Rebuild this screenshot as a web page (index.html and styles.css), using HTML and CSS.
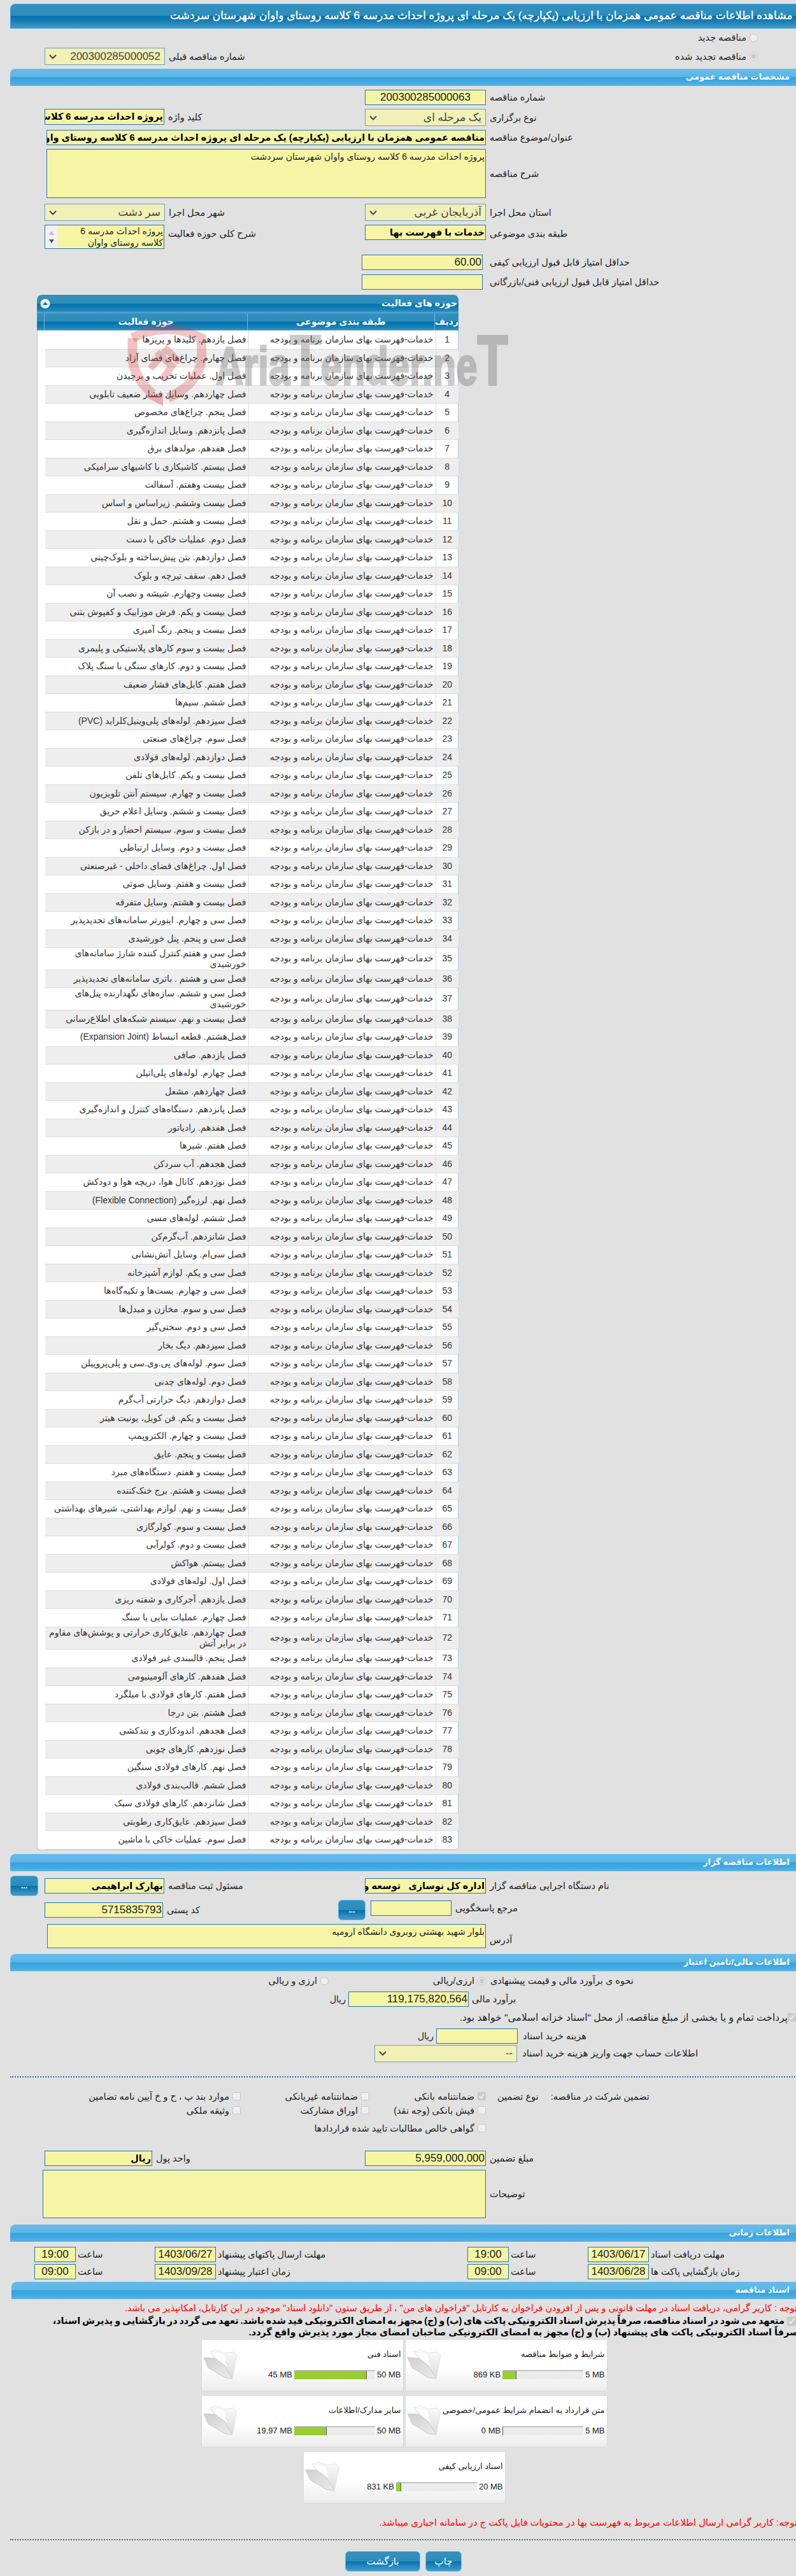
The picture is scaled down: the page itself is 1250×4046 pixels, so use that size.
FILE: index.html
```html
<!DOCTYPE html>
<html lang="fa">
<head>
<meta charset="utf-8">
<title>مشاهده اطلاعات مناقصه</title>
<link rel="stylesheet" href="styles.css">
</head>
<body>
<svg class="sprite" aria-hidden="true"><defs>
<linearGradient id="fb" x1="0" y1="0" x2="0" y2="1"><stop offset="0" stop-color="#fafafa"/><stop offset="1" stop-color="#dcdcdc"/></linearGradient>
<linearGradient id="ff" x1="0" y1="0" x2="1" y2="1"><stop offset="0" stop-color="#cfcfcf"/><stop offset="1" stop-color="#ececec"/></linearGradient>
<symbol id="folder" viewBox="0 0 52 47"><path d="M10 3 20 0 33 5 47 3 52 8 45 45 30 30Z" fill="url(#fb)" stroke="#e2e2e2"/><path d="M14 5 31 7 36 26 22 14Z" fill="#fff"/><path d="M0 12 17 13 33 25 45 45 32 43 7 28Z" fill="url(#ff)" stroke="#c9c9c9" stroke-linejoin="round"/></symbol>
</defs></svg>
<main class="page">
<header class="bar-main"><span>مشاهده اطلاعات مناقصه عمومی همزمان با ارزیابی (یکپارچه) یک مرحله ای پروژه احداث مدرسه 6 کلاسه روستای واوان شهرستان سردشت</span></header>

<div class="row radio-row r-a"><label class="choice"><input type="radio" disabled><span>مناقصه جدید</span></label></div>
<div class="row radio-row r-b">
  <div class="field f-prev"><div class="sel w189"><svg class="chev" viewBox="0 0 12 8"><path d="M1 1.5 6 6.5 11 1.5" fill="none" stroke="#444" stroke-width="2"/></svg><span>200300285000052</span></div><span class="lbl">شماره مناقصه قبلی</span></div>
  <label class="choice"><input type="radio" disabled checked><span>مناقصه تجدید شده</span></label>
</div>

<h2 class="bar mt6">مشخصات مناقصه عمومی</h2>

<div class="row mt6"><div class="field f1"></div><div class="field"><div class="in w190 ltrnum">200300285000063</div><span class="lbl">شماره مناقصه</span></div></div>
<div class="row mt6">
  <div class="field f1"><div class="in w188 h25 bold">پروژه احداث مدرسه 6 کلاسه روستای واوان شهرستان سردشت</div><span class="lbl">کلید واژه</span></div>
  <div class="field"><div class="sel w190"><svg class="chev" viewBox="0 0 12 8"><path d="M1 1.5 6 6.5 11 1.5" fill="none" stroke="#444" stroke-width="2"/></svg><span>یک مرحله ای</span></div><span class="lbl">نوع برگزاری</span></div>
</div>
<div class="row mt6 wide"><div class="field"><div class="in w690 bold">مناقصه عمومی همزمان با ارزیابی (یکپارچه) یک مرحله ای پروژه احداث مدرسه 6 کلاسه روستای واوان شهرستان سردشت</div><span class="lbl">عنوان/موضوع مناقصه</span></div></div>
<div class="row mt6 wide"><div class="field center"><div class="in w690 area h77">پروژه احداث مدرسه 6 کلاسه روستای واوان شهرستان سردشت</div><span class="lbl">شرح مناقصه</span></div></div>
<div class="row mt9">
  <div class="field f1"><div class="sel w189"><svg class="chev" viewBox="0 0 12 8"><path d="M1 1.5 6 6.5 11 1.5" fill="none" stroke="#444" stroke-width="2"/></svg><span>سر دشت</span></div><span class="lbl">شهر محل اجرا</span></div>
  <div class="field"><div class="sel w190"><svg class="chev" viewBox="0 0 12 8"><path d="M1 1.5 6 6.5 11 1.5" fill="none" stroke="#444" stroke-width="2"/></svg><span>آذربایجان غربی</span></div><span class="lbl">استان محل اجرا</span></div>
</div>
<div class="row mt6">
  <div class="field f1 top"><div class="scrollarea"><div class="scroll"><svg viewBox="0 0 8 6"><path d="M4 0 8 6H0Z" fill="#bbb"/></svg><svg viewBox="0 0 8 6"><path d="M0 0H8L4 6Z" fill="#555"/></svg></div><div class="scrolltext">پروژه احداث مدرسه 6 کلاسه روستای واوان</div></div><span class="lbl lbl-top">شرح کلی حوزه فعالیت</span></div>
  <div class="field top"><div class="in w190 bold">خدمات با فهرست بها</div><span class="lbl lbl-top">طبقه بندی موضوعی</span></div>
</div>
<div class="row mt9 shift"><div class="field"><div class="in w190">60.00</div><span class="lbl lbl-far">حداقل امتیاز قابل قبول ارزیابی کیفی</span></div></div>
<div class="row mt7 shift"><div class="field"><div class="in w190"></div><span class="lbl lbl-far">حداقل امتیاز قابل قبول ارزیابی فنی/بازرگانی</span></div></div>

<section class="panel">
<svg class="watermark" viewBox="0 0 600 140">
  <path class="wm-shield" d="M8 30Q62 2 116 30L117 62Q112 102 64 124" />
  <path class="wm-shield" d="M8 30L8 66Q14 96 40 118" />
  <path class="wm-arrow" d="M28 122 56 116 56 137Z"/>
  <path class="wm-shield thin" d="M36 78 62 48 82 68M46 52 70 74 54 96"/>
  <text class="wm-text" x="139" y="103" textLength="459" lengthAdjust="spacingAndGlyphs">Aria<tspan class="wm-big">T</tspan>ender.ne<tspan class="wm-big">T</tspan></text>
</svg>
<div class="panel-title"><span class="collapse"><svg viewBox="0 0 16 16"><circle cx="8" cy="8" r="7.5" fill="#e8f3fa"/><path d="M4 10 8 5 12 10Z" fill="#1b6f9f"/></svg></span><span>حوزه های فعالیت</span></div>
<div class="col-head"><span></span><span>حوزه فعالیت</span><span>طبقه بندی موضوعی</span><span>ردیف</span></div>
<div class="panel-body">
<table class="grid"><colgroup><col class="c1"><col class="c2"><col class="c3"></colgroup><tbody>
<tr><td>فصل یازدهم. کلیدها و پریزها<td>خدمات-فهرست بهای سازمان برنامه و بودجه<td>1
<tr><td>فصل چهارم. چراغ‌های فضای آزاد<td>خدمات-فهرست بهای سازمان برنامه و بودجه<td>2
<tr><td>فصل اول. عملیات تخریب و برچیدن<td>خدمات-فهرست بهای سازمان برنامه و بودجه<td>3
<tr><td>فصل چهاردهم. وسایل فشار ضعیف تابلویی<td>خدمات-فهرست بهای سازمان برنامه و بودجه<td>4
<tr><td>فصل پنجم. چراغ‌های مخصوص<td>خدمات-فهرست بهای سازمان برنامه و بودجه<td>5
<tr><td>فصل پانزدهم. وسایل اندازه‌گیری<td>خدمات-فهرست بهای سازمان برنامه و بودجه<td>6
<tr><td>فصل هفدهم. مولدهای برق<td>خدمات-فهرست بهای سازمان برنامه و بودجه<td>7
<tr><td>فصل بیستم. کاشیکاری با کاشیهای سرامیکی<td>خدمات-فهرست بهای سازمان برنامه و بودجه<td>8
<tr><td>فصل بیست وهفتم. آسفالت<td>خدمات-فهرست بهای سازمان برنامه و بودجه<td>9
<tr><td>فصل بیست وششم. زیراساس و اساس<td>خدمات-فهرست بهای سازمان برنامه و بودجه<td>10
<tr><td>فصل بیست و هشتم. حمل و نقل<td>خدمات-فهرست بهای سازمان برنامه و بودجه<td>11
<tr><td>فصل دوم. عملیات خاکی با دست<td>خدمات-فهرست بهای سازمان برنامه و بودجه<td>12
<tr><td>فصل دوازدهم. بتن پیش‌ساخته و بلوک‌چینی<td>خدمات-فهرست بهای سازمان برنامه و بودجه<td>13
<tr><td>فصل دهم. سقف تیرچه و بلوک<td>خدمات-فهرست بهای سازمان برنامه و بودجه<td>14
<tr><td>فصل بیست وچهارم. شیشه و نصب آن<td>خدمات-فهرست بهای سازمان برنامه و بودجه<td>15
<tr><td>فصل بیست و یکم. فرش موزاییک و کفپوش بتنی<td>خدمات-فهرست بهای سازمان برنامه و بودجه<td>16
<tr><td>فصل بیست و پنجم. رنگ آمیزی<td>خدمات-فهرست بهای سازمان برنامه و بودجه<td>17
<tr><td>فصل بیست و سوم کارهای پلاستیکی و پلیمری<td>خدمات-فهرست بهای سازمان برنامه و بودجه<td>18
<tr><td>فصل بیست و دوم. کارهای سنگی با سنگ پلاک<td>خدمات-فهرست بهای سازمان برنامه و بودجه<td>19
<tr><td>فصل هفتم. کابل‌های فشار ضعیف<td>خدمات-فهرست بهای سازمان برنامه و بودجه<td>20
<tr><td>فصل ششم. سیم‌ها<td>خدمات-فهرست بهای سازمان برنامه و بودجه<td>21
<tr><td>فصل سیزدهم. لوله‌های پلی‌وینیل‌کلراید (PVC)<td>خدمات-فهرست بهای سازمان برنامه و بودجه<td>22
<tr><td>فصل سوم. چراغ‌های صنعتی<td>خدمات-فهرست بهای سازمان برنامه و بودجه<td>23
<tr><td>فصل دوازدهم. لوله‌های فولادی<td>خدمات-فهرست بهای سازمان برنامه و بودجه<td>24
<tr><td>فصل بیست و یکم. کابل‌های تلفن<td>خدمات-فهرست بهای سازمان برنامه و بودجه<td>25
<tr><td>فصل بیست و چهارم. سیستم آنتن تلویزیون<td>خدمات-فهرست بهای سازمان برنامه و بودجه<td>26
<tr><td>فصل بیست و ششم. وسایل اعلام حریق<td>خدمات-فهرست بهای سازمان برنامه و بودجه<td>27
<tr><td>فصل بیست و سوم. سیستم احضار و در بازکن<td>خدمات-فهرست بهای سازمان برنامه و بودجه<td>28
<tr><td>فصل بیست و دوم. وسایل ارتباطی<td>خدمات-فهرست بهای سازمان برنامه و بودجه<td>29
<tr><td>فصل اول. چراغ‌های فضای داخلی - غیرصنعتی<td>خدمات-فهرست بهای سازمان برنامه و بودجه<td>30
<tr><td>فصل بیست و هفتم. وسایل صوتی<td>خدمات-فهرست بهای سازمان برنامه و بودجه<td>31
<tr><td>فصل بیست و هشتم. وسایل متفرقه<td>خدمات-فهرست بهای سازمان برنامه و بودجه<td>32
<tr><td>فصل سی و چهارم. اینورتر سامانه‌های تجدیدپذیر<td>خدمات-فهرست بهای سازمان برنامه و بودجه<td>33
<tr><td>فصل سی و پنجم. پنل خورشیدی<td>خدمات-فهرست بهای سازمان برنامه و بودجه<td>34
<tr><td>فصل سی و هفتم.کنترل کننده شارژ سامانه‌های خورشیدی<td>خدمات-فهرست بهای سازمان برنامه و بودجه<td>35
<tr><td>فصل سی و هشتم . باتری سامانه‌های تجدیدپذیر<td>خدمات-فهرست بهای سازمان برنامه و بودجه<td>36
<tr><td>فصل سی و ششم. سازه‌های نگهدارنده پنل‌های خورشیدی<td>خدمات-فهرست بهای سازمان برنامه و بودجه<td>37
<tr><td>فصل بیست و نهم. سیستم شبکه‌های اطلاع‌رسانی<td>خدمات-فهرست بهای سازمان برنامه و بودجه<td>38
<tr><td>فصل‌هشتم. قطعه انبساط (Expansion Joint)<td>خدمات-فهرست بهای سازمان برنامه و بودجه<td>39
<tr><td>فصل یازدهم. صافی<td>خدمات-فهرست بهای سازمان برنامه و بودجه<td>40
<tr><td>فصل چهارم. لوله‌های پلی‌اتیلن<td>خدمات-فهرست بهای سازمان برنامه و بودجه<td>41
<tr><td>فصل چهاردهم. مشعل<td>خدمات-فهرست بهای سازمان برنامه و بودجه<td>42
<tr><td>فصل پانزدهم. دستگاه‌های کنترل و اندازه‌گیری<td>خدمات-فهرست بهای سازمان برنامه و بودجه<td>43
<tr><td>فصل هفدهم. رادیاتور<td>خدمات-فهرست بهای سازمان برنامه و بودجه<td>44
<tr><td>فصل هفتم. شیرها<td>خدمات-فهرست بهای سازمان برنامه و بودجه<td>45
<tr><td>فصل هجدهم. آب سردکن<td>خدمات-فهرست بهای سازمان برنامه و بودجه<td>46
<tr><td>فصل نوزدهم. کانال هوا، دریچه هوا و دودکش<td>خدمات-فهرست بهای سازمان برنامه و بودجه<td>47
<tr><td>فصل نهم. لرزه‌گیر (Flexible Connection)<td>خدمات-فهرست بهای سازمان برنامه و بودجه<td>48
<tr><td>فصل ششم. لوله‌های مسی<td>خدمات-فهرست بهای سازمان برنامه و بودجه<td>49
<tr><td>فصل شانزدهم. آب‌گرم‌کن<td>خدمات-فهرست بهای سازمان برنامه و بودجه<td>50
<tr><td>فصل سی‌ام. وسایل آتش‌نشانی<td>خدمات-فهرست بهای سازمان برنامه و بودجه<td>51
<tr><td>فصل سی و یکم. لوازم آشپزخانه<td>خدمات-فهرست بهای سازمان برنامه و بودجه<td>52
<tr><td>فصل سی و چهارم. بست‌ها و تکیه‌گاه‌ها<td>خدمات-فهرست بهای سازمان برنامه و بودجه<td>53
<tr><td>فصل سی و سوم. مخازن و مبدل‌ها<td>خدمات-فهرست بهای سازمان برنامه و بودجه<td>54
<tr><td>فصل سی و دوم. سختی‌گیر<td>خدمات-فهرست بهای سازمان برنامه و بودجه<td>55
<tr><td>فصل سیزدهم. دیگ بخار<td>خدمات-فهرست بهای سازمان برنامه و بودجه<td>56
<tr><td>فصل سوم. لوله‌های پی.وی.سی و پلی‌پروپیلن<td>خدمات-فهرست بهای سازمان برنامه و بودجه<td>57
<tr><td>فصل دوم. لوله‌های چدنی<td>خدمات-فهرست بهای سازمان برنامه و بودجه<td>58
<tr><td>فصل دوازدهم. دیگ حرارتی آب‌گرم<td>خدمات-فهرست بهای سازمان برنامه و بودجه<td>59
<tr><td>فصل بیست و یکم. فن کویل، یونیت هیتر<td>خدمات-فهرست بهای سازمان برنامه و بودجه<td>60
<tr><td>فصل بیست و چهارم. الکتروپمپ<td>خدمات-فهرست بهای سازمان برنامه و بودجه<td>61
<tr><td>فصل بیست و پنجم. عایق<td>خدمات-فهرست بهای سازمان برنامه و بودجه<td>62
<tr><td>فصل بیست و هفتم. دستگاه‌های مبرد<td>خدمات-فهرست بهای سازمان برنامه و بودجه<td>63
<tr><td>فصل بیست و هشتم. برج خنک‌کننده<td>خدمات-فهرست بهای سازمان برنامه و بودجه<td>64
<tr><td>فصل بیست و نهم. لوازم بهداشتی، شیرهای بهداشتی<td>خدمات-فهرست بهای سازمان برنامه و بودجه<td>65
<tr><td>فصل بیست و سوم. کولرگازی<td>خدمات-فهرست بهای سازمان برنامه و بودجه<td>66
<tr><td>فصل بیست و دوم. کولرآبی<td>خدمات-فهرست بهای سازمان برنامه و بودجه<td>67
<tr><td>فصل بیستم. هواکش<td>خدمات-فهرست بهای سازمان برنامه و بودجه<td>68
<tr><td>فصل اول. لوله‌های فولادی<td>خدمات-فهرست بهای سازمان برنامه و بودجه<td>69
<tr><td>فصل یازدهم. آجرکاری و شفته ریزی<td>خدمات-فهرست بهای سازمان برنامه و بودجه<td>70
<tr><td>فصل چهارم. عملیات بنایی با سنگ<td>خدمات-فهرست بهای سازمان برنامه و بودجه<td>71
<tr><td>فصل چهاردهم. عایق‌کاری حرارتی و پوشش‌های مقاوم در برابر آتش<td>خدمات-فهرست بهای سازمان برنامه و بودجه<td>72
<tr><td>فصل پنجم. قالببندی غیر فولادی<td>خدمات-فهرست بهای سازمان برنامه و بودجه<td>73
<tr><td>فصل هفدهم. کارهای آلومینیومی<td>خدمات-فهرست بهای سازمان برنامه و بودجه<td>74
<tr><td>فصل هفتم. کارهای فولادی با میلگرد<td>خدمات-فهرست بهای سازمان برنامه و بودجه<td>75
<tr><td>فصل هشتم. بتن درجا<td>خدمات-فهرست بهای سازمان برنامه و بودجه<td>76
<tr><td>فصل هجدهم. اندودکاری و بندکشی<td>خدمات-فهرست بهای سازمان برنامه و بودجه<td>77
<tr><td>فصل نوزدهم. کارهای چوبی<td>خدمات-فهرست بهای سازمان برنامه و بودجه<td>78
<tr><td>فصل نهم. کارهای فولادی سنگین<td>خدمات-فهرست بهای سازمان برنامه و بودجه<td>79
<tr><td>فصل ششم. قالب‌بندی فولادی<td>خدمات-فهرست بهای سازمان برنامه و بودجه<td>80
<tr><td>فصل شانزدهم. کارهای فولادی سبک<td>خدمات-فهرست بهای سازمان برنامه و بودجه<td>81
<tr><td>فصل سیزدهم. عایق‌کاری رطوبتی<td>خدمات-فهرست بهای سازمان برنامه و بودجه<td>82
<tr><td>فصل سوم. عملیات خاکی با ماشین<td>خدمات-فهرست بهای سازمان برنامه و بودجه<td>83
</tbody></table>
</div>
</section>

<h2 class="bar mt6">اطلاعات مناقصه گزار</h2>
<div class="row org-row">
  <button class="dots" type="button">...</button>
  <div class="field f-org"><div class="in w188 bold">بهارک ابراهیمی</div><span class="lbl">مسئول ثبت مناقصه</span></div>
  <div class="field"><div class="in w190 bold">اداره کل نوسازی   توسعه و تجهیز مدارس</div><span class="lbl">نام دستگاه اجرایی مناقصه گزار</span></div>
</div>
<div class="row ref-row">
  <div class="field f-code"><div class="in w186">5715835793</div><span class="lbl">کد پستی</span></div>
  <button class="dots dots-ref" type="button">...</button>
  <div class="field"><div class="in w127"></div><span class="lbl">مرجع پاسخگویی</span></div>
</div>
<div class="row mt6 wide-addr"><div class="field"><div class="in w689 area h38">بلوار شهید بهشتی روبروی دانشگاه ارومیه</div><span class="lbl lbl-low">آدرس</span></div></div>

<h2 class="bar mt9">اطلاعات مالی/تامین اعتبار</h2>
<div class="estimate">
  <label class="choice c-rial"><input type="radio" disabled><span>ارزی و ریالی</span></label>
  <label class="choice c-arz"><input type="radio" disabled checked><span>ارزی/ریالی</span></label>
  <span class="lbl">نحوه ی برآورد مالی و قیمت پیشنهادی</span>
</div>
<div class="row est-row"><span class="unit">ریال</span><div class="in w189">119,175,820,564</div><span class="lbl lbl-tight">برآورد مالی</span></div>
<label class="treasury"><input type="checkbox" disabled checked><span>پرداخت تمام و یا بخشی از مبلغ مناقصه، از محل "اسناد خزانه اسلامی" خواهد بود.</span></label>
<div class="row cost-row"><span class="unit">ریال</span><div class="in w128"></div><span class="lbl lbl-mid">هزینه خرید اسناد</span></div>
<div class="row acc-row"><div class="sel w224"><svg class="chev" viewBox="0 0 12 8"><path d="M1 1.5 6 6.5 11 1.5" fill="none" stroke="#444" stroke-width="2"/></svg><span>--</span></div><span class="lbl lbl-mid lbl-acc">اطلاعات حساب جهت واریز هزینه خرید اسناد</span></div>
<hr class="rule r1">

<div class="guar g1">
  <label class="choice"><input type="checkbox" disabled><span>موارد بند پ ، ح و خ آیین نامه تضامین</span></label>
  <label class="choice"><input type="checkbox" disabled><span>ضمانتنامه غیربانکی</span></label>
  <label class="choice"><input type="checkbox" disabled checked><span>ضمانتنامه بانکی</span></label>
  <div class="guar-label"><span class="lbl">نوع تضمین</span><span class="lbl">تضمین شرکت در مناقصه:</span></div>
</div>
<div class="guar g2">
  <label class="choice"><input type="checkbox" disabled><span>وثیقه ملکی</span></label>
  <label class="choice"><input type="checkbox" disabled><span>اوراق مشارکت</span></label>
  <label class="choice"><input type="checkbox" disabled><span>فیش بانکی (وجه نقد)</span></label>
</div>
<div class="guar g3">
  <span></span><span></span>
  <label class="choice"><input type="checkbox" disabled><span>گواهی خالص مطالبات تایید شده قراردادها</span></label>
</div>

<div class="row amount-row">
  <div class="field f1"><div class="in w169 bold">ریال</div><span class="lbl">واحد پول</span></div>
  <div class="field"><div class="in w190">5,959,000,000</div><span class="lbl">مبلغ تضمین</span></div>
</div>
<div class="row mt6 wide-note"><div class="field center"><div class="in w696 area h76"></div><span class="lbl">توضیحات</span></div></div>

<h2 class="bar mt10">اطلاعات زمانی</h2>
<div class="times t1">
  <div class="field"><div class="in tm">19:00</div><span class="lbl">ساعت</span></div>
  <div class="field"><div class="in dt">1403/06/27</div><span class="lbl">مهلت ارسال پاکتهای پیشنهاد</span></div>
  <div class="field"><div class="in tm">19:00</div><span class="lbl">ساعت</span></div>
  <div class="field"><div class="in dt">1403/06/17</div><span class="lbl">مهلت دریافت اسناد</span></div>
</div>
<div class="times t2">
  <div class="field"><div class="in tm">09:00</div><span class="lbl">ساعت</span></div>
  <div class="field"><div class="in dt">1403/09/28</div><span class="lbl">زمان اعتبار پیشنهاد</span></div>
  <div class="field"><div class="in tm">09:00</div><span class="lbl">ساعت</span></div>
  <div class="field"><div class="in dt">1403/06/28</div><span class="lbl">زمان بازگشایی پاکت ها</span></div>
</div>

<h2 class="bar bar-docs">اسناد مناقصه</h2>
<p class="note red">توجه : کاربر گرامی، دریافت اسناد در مهلت قانونی و پس از افزودن فراخوان به کارتابل "فراخوان های من" ، از طریق ستون "دانلود اسناد" موجود در این کارتابل، امکانپذیر می باشد.</p>
<p class="pledge"><input type="checkbox" disabled checked> <span class="pledge-first">متعهد می شود در اسناد مناقصه، صرفاً پذیرش اسناد الکترونیکی پاکت های (ب) و (ج) مجهز به امضای الکترونیکی قید شده باشد. تعهد می گردد در بازگشایی و پذیرش اسناد،</span><br>صرفاً اسناد الکترونیکی پاکت های پیشنهاد (ب) و (ج) مجهز به امضای الکترونیکی صاحبان امضای مجاز مورد پذیرش واقع گردد.</p>

<div class="docs">
  <article class="card"><div class="card-title">شرایط و ضوابط مناقصه</div><svg class="folder"><use href="#folder"/></svg><div class="meter"><span>869 KB</span><div class="track"><div class="fill" style="width:17%"></div></div><span>5 MB</span></div></article>
  <article class="card"><div class="card-title">اسناد فنی</div><svg class="folder"><use href="#folder"/></svg><div class="meter"><span>45 MB</span><div class="track"><div class="fill" style="width:90%"></div></div><span>50 MB</span></div></article>
  <article class="card"><div class="card-title">متن قرارداد به انضمام شرایط عمومی/خصوصی</div><svg class="folder"><use href="#folder"/></svg><div class="meter"><span>0 MB</span><div class="track"><div class="fill" style="width:0%"></div></div><span>5 MB</span></div></article>
  <article class="card"><div class="card-title">سایر مدارک/اطلاعات</div><svg class="folder"><use href="#folder"/></svg><div class="meter"><span>19.97 MB</span><div class="track"><div class="fill" style="width:40%"></div></div><span>50 MB</span></div></article>
  <article class="card"><div class="card-title">اسناد ارزیابی کیفی</div><svg class="folder"><use href="#folder"/></svg><div class="meter"><span>831 KB</span><div class="track"><div class="fill" style="width:6%"></div></div><span>20 MB</span></div></article>
</div>

<p class="note red bottom-note">توجه: کاربر گرامی ارسال اطلاعات مربوط به فهرست بها در محتویات فایل پاکت ج در سامانه اجباری میباشد.</p>
<hr class="rule r2">
<div class="actions"><button class="act back" type="button">بازگشت</button><button class="act print" type="button">چاپ</button></div>
</main>
</body>
</html>
```

FILE: styles.css
```css
*{box-sizing:border-box}
html,body{margin:0;padding:0;overflow-x:hidden}
body{background:#e1e1e1;color:#222;font-family:"Liberation Sans","DejaVu Sans",sans-serif;font-size:14px}
.sprite{position:absolute;width:0;height:0}
.page{width:1260px;margin:6px 0 0 16px;height:4040px;overflow:hidden}
.bar-main{height:39px;padding-left:250px;border:1px solid #3a9ae0;border-bottom-color:#4aa3dc;border-radius:8px 0 0 0;background:linear-gradient(#3391be 0,#2d8cbb 49%,#0272ad 50%,#1c82b6 75%,#449bc9 100%);color:#fff;font-size:17px;-webkit-text-stroke:.35px #fff;line-height:36px;white-space:nowrap}
.bar-main span{direction:rtl;display:inline-block}
.bar{margin:0;height:27px;padding-right:36px;border-radius:8px 0 0 0;background:linear-gradient(#65bbe9 0,#5eb6e6 49%,#37a4df 50%,#3ea8e1 75%,#5bb3e5 100%);color:#fff;font-size:13px;font-weight:bold;line-height:26px;direction:rtl}
.mt6{margin-top:6px}.mt7{margin-top:7px}.mt9{margin-top:9px}.mt10{margin-top:10px}
.row{display:flex;padding-left:54px;align-items:flex-start}
.field{display:flex;align-items:center}
.field.top{align-items:flex-start}
.f1{width:503px}
.lbl{direction:rtl;white-space:nowrap;margin-left:6px;font-size:14.5px;color:#222;line-height:20px}
.lbl-top{margin-top:4px}
.lbl-low{margin-top:12px}
.lbl-far{margin-left:11px}
.lbl-tight{margin-left:5px}
.lbl-mid{margin-left:8px}
.lbl-acc{font-size:15px}
.in{flex:none;height:24px;border:1px solid #2776a9;background:#f6f5a5;direction:rtl;overflow:hidden;white-space:pre;font-size:17px;line-height:22px;padding:0 1px;color:#222;text-align:right}
.bold{font-weight:bold;font-size:14.5px;color:#000}
.ltrnum{text-align:center}
.area{white-space:normal;font-size:14px}
.sel{flex:none;height:27px;border:1px solid #6f9fbd;background:#f1f0b6;display:flex;align-items:center;justify-content:space-between;padding:0 6px;font-size:17px;color:#444;direction:ltr;white-space:nowrap}
.sel span{direction:rtl}
.chev{width:12px;height:8px}
.w189{width:189px}.w190{width:190px}.w188{width:188px}.w690{width:690px}.w689{width:689px}.w696{width:696px}.w186{width:186px}.w127{width:127px}.w128{width:128px}.w169{width:169px}.w224{width:224px}
.h25{height:25px}.h77{height:77px}.h38{height:38px}.h76{height:76px}
.radio-row{justify-content:flex-end;padding-right:86px}
.r-a{margin-top:7px;height:14px;align-items:center}
.r-b{margin-top:9px;height:27px;align-items:center;justify-content:space-between}
.choice{display:flex;direction:rtl;align-items:center;font-size:14.5px;white-space:nowrap}
.choice input{margin:0 0 0 5px;width:13px;height:13px;flex:none}
.wide{padding-left:57px}
.wide-addr{padding-left:58px}
.wide-note{padding-left:51px}
.shift{padding-left:552px}
.scrollarea{width:188px;height:38px;border:1px solid #2776a9;background:#f6f5a5;display:flex;overflow:hidden}
.scroll{width:20px;flex:none;background:#f1f1f1;display:flex;flex-direction:column;align-items:center;justify-content:space-between;padding:9px 0 8px}
.scroll svg{width:8px;height:6px;display:block}
.scrolltext{direction:rtl;font-size:14px;line-height:18px;flex:1;padding:0 1px}

.panel{position:relative;margin:8px 0 0 42px;width:662px}
.watermark{position:absolute;left:142px;top:38px;width:600px;height:140px;overflow:visible;z-index:5;pointer-events:none}
.wm-shield{fill:none;stroke:rgba(205,60,60,.3);stroke-width:15}
.wm-shield.thin{stroke-width:11}
.wm-arrow{fill:rgba(205,60,60,.35)}
.wm-text{font-family:"Liberation Sans",sans-serif;font-weight:bold;font-size:84px;fill:#6e6e6e;stroke:#6e6e6e;stroke-width:3px;opacity:.36}
.wm-big{font-size:112px}
.panel-title{height:28px;border-radius:8px 8px 0 0;background:linear-gradient(#3391be 0,#2d8cbb 49%,#0272ad 50%,#1c82b6 85%,#449bc9 100%);color:#fff;font-size:14px;font-weight:bold;line-height:27px;direction:rtl;padding-right:2px;position:relative}
.collapse{position:absolute;left:5px;top:6px;width:16px;height:16px;display:block}
.collapse svg{display:block}
.col-head{display:grid;grid-template-columns:12px 319px 294px 37px;height:28px;background:linear-gradient(#3391be 0,#2d8cbb 49%,#0272ad 50%,#1c82b6 85%,#449bc9 100%);color:#fff;font-size:14px;font-weight:bold;line-height:26px;text-align:center;direction:ltr;border-top:1px solid #5aaed8}
.col-head span{border-right:1px solid #6fb7de;direction:rtl}
.col-head span:last-child{border-right:0}
.panel-body{background:#fff;padding-left:12px;border:1px solid #a7cfe8;border-width:0 1px 1px 1px;border-radius:0 0 6px 6px;margin:0}
.grid{border-collapse:collapse;table-layout:fixed;width:649px;font-size:14px;color:#333}
.c1{width:319px}.c2{width:294px}.c3{width:36px}
.grid td{height:28px;padding:0 3px;direction:rtl;text-align:right;border-bottom:1px solid #ddd;border-right:1px solid #ddd;line-height:17px}
.grid td:last-child{border-right:0;text-align:center}
.grid tr:nth-child(odd) td{height:29px}
.grid tr:nth-child(even){background:#eee}

.dots{flex:none;width:44px;height:32px;border:1px solid #5cc0ea;border-radius:6px;background:linear-gradient(#3391be 0,#2d8cbb 49%,#0272ad 50%,#449bc9 100%);color:#fff;font-size:12px;font-weight:bold;padding:0}
.org-row{padding-left:0;margin-top:7px;height:32px}
.org-row .field{height:24px;margin-top:4px}
.f-org{width:503px;margin-left:10px}
.ref-row{margin-top:6px;height:32px;position:relative}
.f-code{width:461px;margin-top:4px;align-self:flex-start}
.dots-ref{width:43px;margin:0 8px 0 0}
.ref-row .field:last-child{margin-top:1px}
.estimate{display:flex;align-items:center;height:15px;margin:8px 0 0 384px;direction:ltr}
.c-rial{width:116px}
.c-arz{width:247px}
.estimate .lbl{margin-left:7px}
.est-row{padding-left:503px;margin-top:9px;align-items:center}
.unit{direction:rtl;width:28px;font-size:14px;padding-right:4px}
.treasury{display:flex;direction:rtl;align-items:center;margin-top:7px;height:20px;font-size:15.5px;padding-right:26px}
.treasury input{margin:0;width:13px;height:13px}
.cost-row{padding-left:641px;margin-top:7px;align-items:center}
.acc-row{padding-left:572px;margin-top:2px;align-items:center}
.rule{border:0;border-top:2px dotted #2776a9;margin:0;width:1260px}
.r1{margin-top:22px}
.guar{display:grid;grid-template-columns:362px 202px 183px 1fr;height:18px;align-items:center}
.guar .choice{justify-content:flex-start}
.g1{margin-top:20px}
.g2{margin-top:5px}
.g3{margin-top:10px}
.guar-label{display:flex;padding-left:18px;gap:19px;direction:ltr}
.guar-label .lbl{margin:0}
.amount-row{margin-top:26px}
.times{display:grid;grid-template-columns:189px 491px 189px 1fr;padding-left:38px;height:24px}
.times .lbl{margin-left:3px}
.t1{margin-top:8px}
.t2{margin-top:3px}
.tm{width:65px;text-align:center}
.dt{width:96px;text-align:center}
.bar-docs{margin:4px 0 0 2px}
.note{margin:0;direction:rtl;white-space:nowrap;padding-right:24px}
.red{color:#f00;font-size:14.4px}
.note.red{margin-top:4px;height:20px;line-height:20px}
.pledge{margin:1px 0 0;padding-right:22px;direction:rtl;white-space:nowrap;font-weight:bold;font-size:14.5px;line-height:18px;color:#000}
.pledge-first{word-spacing:-1.2px}
.pledge input{width:14px;height:14px;margin:0 4px 0 0;vertical-align:middle}
.docs{display:flex;flex-wrap:wrap;justify-content:center;gap:8px 4px;width:637px;margin:3px 0 0 300px;direction:rtl}
.card{position:relative;width:316px;height:80px;background:linear-gradient(#fff 55%,#ececec);box-shadow:0 0 2px #ccc;direction:ltr}
.card-title{position:absolute;right:3px;top:15px;direction:rtl;font-size:13px;white-space:nowrap}
.folder{position:absolute;left:3px;top:16px;width:52px;height:47px}
.meter{position:absolute;right:3px;top:48px;display:flex;align-items:center;gap:3px;font-size:13px;line-height:14px}
.track{width:127px;height:14px;background:#ececec;border-top:1px solid #999}
.fill{height:13px;background:#9acd32;border-right:1px solid #555}
.note.red.bottom-note{margin-top:21px;font-size:14.8px}
.r2{margin-top:16px}
.actions{display:flex;gap:8px;margin:17px 0 0 526px}
.act{height:32px;border:1px solid #5cc4ee;border-radius:6px;background:linear-gradient(#3391be 0,#2d8cbb 49%,#0272ad 50%,#449bc9 100%);color:#fff;font-family:inherit;font-size:15px;padding:0;direction:rtl}
.back{width:118px}
.print{width:57px}
```
